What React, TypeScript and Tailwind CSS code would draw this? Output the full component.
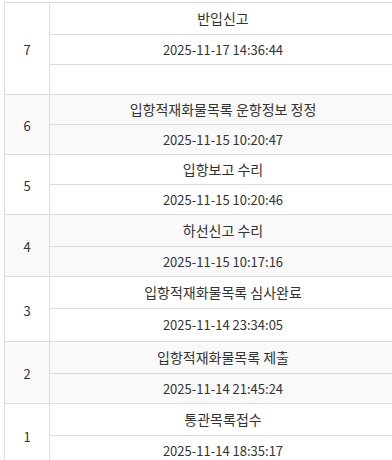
import React from "react";

type Row = { text: string; h: string; title: boolean };
type Group = { no: number; bg: boolean; rows: Row[] };

const groups: Group[] = [
  { no: 7, bg: false, rows: [
    { text: "반입신고", h: "h-[32px]", title: true },
    { text: "2025-11-17 14:36:44", h: "h-[30px]", title: false },
    { text: "", h: "h-[29px]", title: false },
  ] },
  { no: 6, bg: true, rows: [
    { text: "입항적재화물목록 운항정보 정정", h: "h-[30px]", title: true },
    { text: "2025-11-15 10:20:47", h: "h-[29px]", title: false },
  ] },
  { no: 5, bg: false, rows: [
    { text: "입항보고 수리", h: "h-[30px]", title: true },
    { text: "2025-11-15 10:20:46", h: "h-[29px]", title: false },
  ] },
  { no: 4, bg: true, rows: [
    { text: "하선신고 수리", h: "h-[32px]", title: true },
    { text: "2025-11-15 10:17:16", h: "h-[29px]", title: false },
  ] },
  { no: 3, bg: false, rows: [
    { text: "입항적재화물목록 심사완료", h: "h-[32px]", title: true },
    { text: "2025-11-14 23:34:05", h: "h-[32px]", title: false },
  ] },
  { no: 2, bg: true, rows: [
    { text: "입항적재화물목록 제출", h: "h-[32px]", title: true },
    { text: "2025-11-14 21:45:24", h: "h-[29px]", title: false },
  ] },
  { no: 1, bg: false, rows: [
    { text: "통관목록접수", h: "h-[32px]", title: true },
    { text: "2025-11-14 18:35:17", h: "h-[30px]", title: false },
  ] },
];

export default function App() {
  return (
    <div
      className="w-[392px] h-[460px] overflow-hidden bg-white text-[13px] text-[#333]"
      style={{ fontFamily: '"Noto Sans CJK KR", "Noto Sans", sans-serif' }}
    >
      <div className="ml-[4px] mt-[2px] w-[393px] border-t border-l border-r border-[#ddd]">
        {groups.map((g) => (
          <div
            key={g.no}
            className={`flex border-b border-[#ddd] ${g.bg ? "bg-[#f9f9f9]" : "bg-white"}`}
          >
            <div className="w-[45px] shrink-0 border-r border-[#ddd] flex items-center justify-center pt-[3px]">
              {g.no}
            </div>
            <div className="flex-1 flex flex-col">
              {g.rows.map((r, i) => (
                <div
                  key={i}
                  className={`${r.h} flex items-center justify-center ${r.title ? "text-[14px]" : "text-[13px]"} ${i < g.rows.length - 1 ? "border-b border-[#ddd]" : ""}`}
                >
                  {r.text}
                </div>
              ))}
            </div>
          </div>
        ))}
      </div>
    </div>
  );
}
